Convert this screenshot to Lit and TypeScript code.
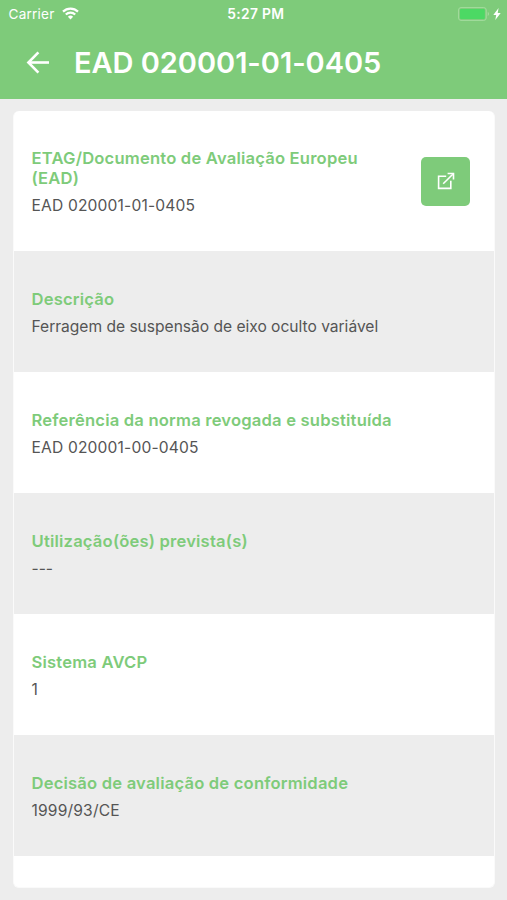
import { LitElement, html, css, nothing } from "lit";
import { customElement, property } from "lit/decorators.js";

interface Field {
  label: string;
  value: string;
  link?: boolean;
}

const FIELDS: Field[] = [
  { label: "ETAG/Documento de Avaliação Europeu (EAD)", value: "EAD 020001-01-0405", link: true },
  { label: "Descrição", value: "Ferragem de suspensão de eixo oculto variável" },
  { label: "Referência da norma revogada e substituída", value: "EAD 020001-00-0405" },
  { label: "Utilização(ões) prevista(s)", value: "---" },
  { label: "Sistema AVCP", value: "1" },
  { label: "Decisão de avaliação de conformidade", value: "1999/93/CE" },
];

@customElement("status-bar")
class StatusBar extends LitElement {
  static styles = css`
    :host {
      display: grid;
      grid-template-columns: 1fr auto 1fr;
      align-items: center;
      height: 27px;
      padding: 0 6px 0 8.5px;
      font-size: 13.6px;
      line-height: 27px;
    }
    .carrier { display: flex; align-items: center; gap: 7.5px; letter-spacing: 0.2px; }
    .carrier span, .time { padding-top: 1px; line-height: 26px; }
    .time { font-weight: 600; font-size: 13.8px; letter-spacing: 0.35px; margin-left: 2px; }
    .power { display: flex; align-items: center; justify-content: flex-end; gap: 3.5px; }
    svg { display: block; }
  `;
  render() {
    return html`
      <div class="carrier">
        <span>Carrier</span>
        <svg width="17" height="13" viewBox="0 0 17 13" fill="none" stroke="#fff" stroke-width="2.2">
          <path d="M1 4.6A10.8 10.8 0 0 1 16 4.6" />
          <path d="M3.8 7.5A6.8 6.8 0 0 1 13.2 7.5" />
          <path d="M8.5 12.4 5.9 9.8a3.7 3.7 0 0 1 5.2 0z" fill="#fff" stroke="none" />
        </svg>
      </div>
      <div class="time">5:27 PM</div>
      <div class="power">
        <svg width="32" height="14" viewBox="0 0 32 14">
          <rect x="0.6" y="0.6" width="27.6" height="12.8" rx="2.4" fill="none" stroke="#a5dc9f" />
          <rect x="2" y="2" width="24.8" height="10" rx="1" fill="#4cd964" />
          <path d="M29.8 4.8q1.9 2.2 0 4.4z" fill="#b4e2ad" />
        </svg>
        <svg class="bolt" width="8" height="12" viewBox="0 0 8 12">
          <path d="M5.6 0 0.3 7h2.9L2.3 12 7.7 4.9H4.7z" fill="#fff" />
        </svg>
      </div>
    `;
  }
}

@customElement("field-row")
class FieldRow extends LitElement {
  @property({ attribute: false }) field!: Field;

  static styles = css`
    :host {
      display: flex;
      align-items: center;
      justify-content: space-between;
      box-sizing: border-box;
      min-height: 121px;
      padding: 37.5px 23.5px 33.8px 17.5px;
    }
    .text { display: flex; flex-direction: column; gap: 7px; }
    .label {
      color: #7ecb7a;
      font-size: 16.6px;
      font-weight: 600;
      line-height: 20px;
      letter-spacing: 0.19px;
    }
    .value { color: #555; font-size: 15.6px; line-height: 22px; letter-spacing: -0.02px; }
    .code { letter-spacing: 0.16px; }
    .open {
      flex: none;
      display: flex;
      align-items: center;
      justify-content: center;
      width: 49px;
      height: 49px;
      margin: 0 0 3px 20px;
      padding: 0;
      border: 0;
      border-radius: 5px;
      background: #7ecb7a;
    }
  `;
  render() {
    const isCode = /^[A-Z]*\s?\d/.test(this.field.value);
    return html`
      <div class="text">
        <div class="label">${this.field.label}</div>
        <div class="value ${isCode ? "code" : ""}">${this.field.value}</div>
      </div>
      ${this.field.link
        ? html`<button class="open" aria-label="Abrir">
            <svg width="18" height="18" viewBox="0 0 18 18" fill="none" stroke="#fff" stroke-width="1.6">
              <path d="M9.2 4.2H1.6v12.2h12.2V8.8" />
              <path d="M6.2 11.8 15.8 2.2" />
              <path d="M10.6 1.5h5.9v5.9" />
            </svg>
          </button>`
        : nothing}
    `;
  }
}

@customElement("app-root")
class AppRoot extends LitElement {
  static styles = css`
    :host {
      display: flex;
      flex-direction: column;
      box-sizing: border-box;
      height: 900px;
      overflow: hidden;
      background: #ededed;
      font-family: Inter, "Liberation Sans", sans-serif;
    }
    .header { flex: none; height: 98.5px; background: #7ecb7a; color: #fff; }
    .toolbar { display: flex; align-items: center; height: 71px; padding-left: 26px; gap: 24px; }
    .title {
      margin: 0;
      font-size: 29px;
      font-weight: 560;
      line-height: 36px;
      letter-spacing: -0.04px;
      white-space: nowrap;
    }
    .back { display: block; }
    .card {
      flex: 1;
      margin: 12.1px 12.5px 12.5px 13px;
      border: 1.5px solid #fafafa;
      border-top: 0;
      border-radius: 6px;
      background: #fff;
      overflow: hidden;
    }
    .alt { background: #ededed; }
  `;
  render() {
    return html`
      <header class="header">
        <status-bar></status-bar>
        <div class="toolbar">
          <svg class="back" width="24" height="24" viewBox="0 0 24 24" fill="none" stroke="#fff" stroke-width="2.6">
            <path d="M2.5 11.5H23" />
            <path d="M12.4 1.3 2.4 11.5l10 10.2" />
          </svg>
          <h1 class="title">EAD 020001-01-0405</h1>
        </div>
      </header>
      <main class="card">
        ${FIELDS.map((f, i) => html`<field-row class=${i % 2 ? "alt" : "plain"} .field=${f}></field-row>`)}
      </main>
    `;
  }
}
